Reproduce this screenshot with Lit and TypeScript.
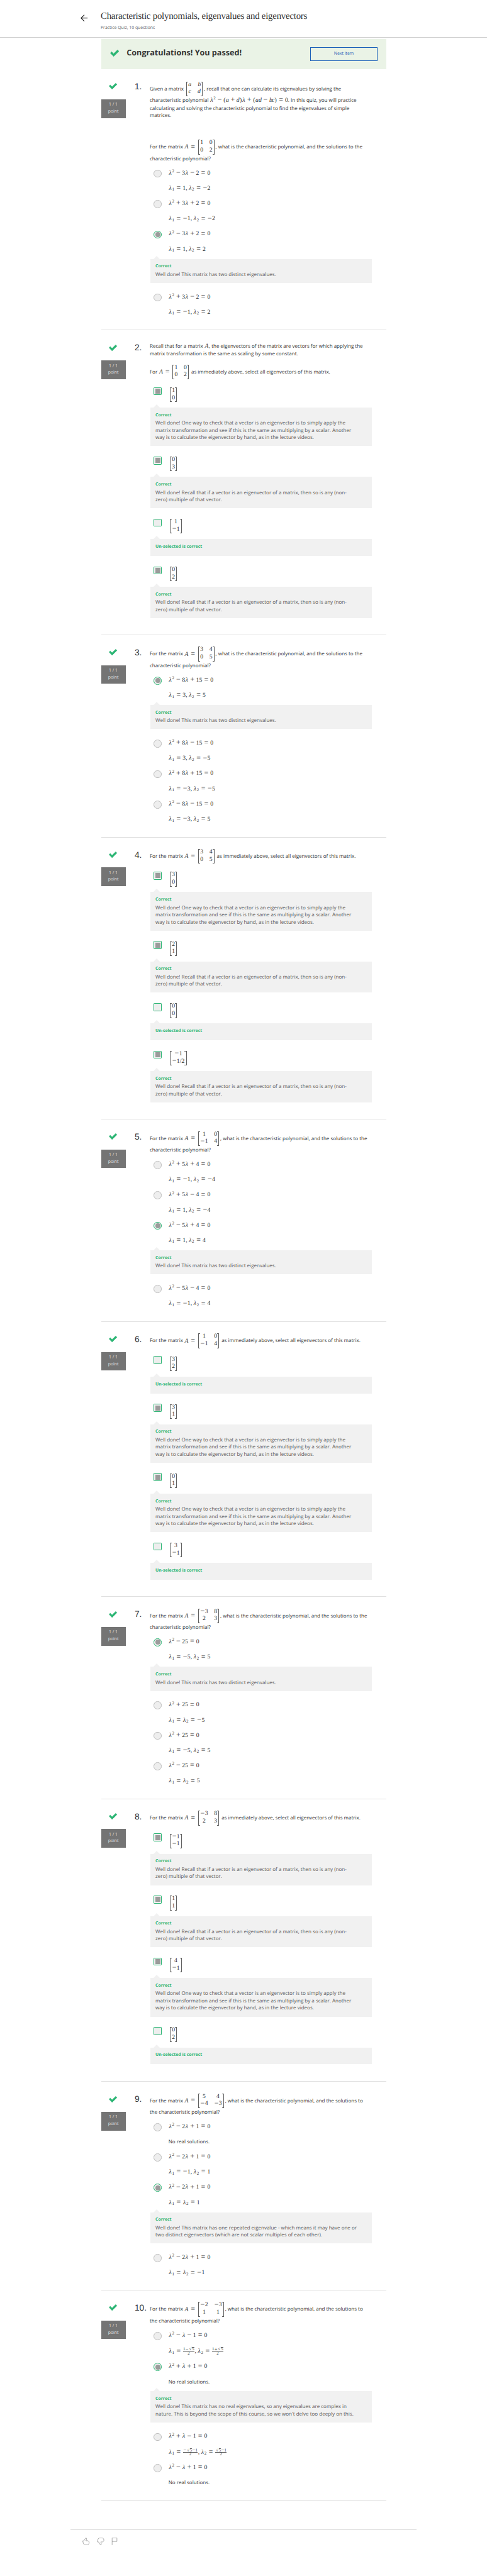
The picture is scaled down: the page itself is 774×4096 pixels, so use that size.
import { LitElement, html, svg, css, nothing, TemplateResult } from "lit";
import { customElement, property } from "lit/decorators.js";
import { classMap } from "lit/directives/class-map.js";

type Matrix = string[][];
interface Feedback { title: string; lines: string[] }
interface Choice { on: boolean; kind: "radio" | "check"; rows?: string[]; vec?: Matrix; note?: Feedback }
interface Question { intro: TemplateResult; choices: Choice[]; tail?: number }

/* ---------- math typesetting ---------- */

const WIDTHS: Record<string, string> = { a: "wa", b: "wb", c: "wc", d: "wd", A: "wA" };

const token = (t: string): TemplateResult => {
  if (t === "L") return html`<i class="lam">λ</i>`;
  if (t === "L2") return html`<i class="lam">λ</i><span class="sup">2</span>`;
  if (t === "L_1") return html`<i class="lam">λ</i><span class="sub">1</span>`;
  if (t === "L_2") return html`<i class="lam">λ</i><span class="sub">2</span>`;
  if (t === "=") return html`<span class="op rel"><span class="big">=</span></span>`;
  if (t === "+" ) return html`<span class="op bin"><span class="big">+</span></span>`;
  if (t === "-") return html`<span class="op bin"><span class="big">−</span></span>`;
  if (t === "~") return html`<span class="op"><span class="big">−</span></span>`;
  if (t === "+s") return html`<span class="op"><span class="big">+</span></span>`;
  if (t === ",") return html`<span class="comma">,</span>`;
  if (t === "(" || t === ")") return html`<span class="par">${t}</span>`;
  if (t === "r5") return html`<span class="root">√</span><span class="under">5</span>`;
  if (WIDTHS[t]) return html`<i class="var ${WIDTHS[t]}">${t}</i>`;
  if (t.startsWith("F:")) {
    const [n, d] = t.slice(2).split("|");
    return html`<span class="frac"><span class="num">${n.split(";").map(token)}</span><span class="den">${d}</span></span>`;
  }
  return html`<span class="dig">${t}</span>`;
};

const math = (s: string) => html`<span class="math">${s.split(" ").map(token)}</span>`;

const matrix = (m: Matrix) => html`<span class="math matrix"><span class="br left"></span>${m[0].map((_, c) =>
  html`<span class="col">${m.map(r => html`<span class="cell">${r[c].split(" ").map(token)}</span>`)}</span>`)}<span class="br right"></span></span>`;

const mathStyles = css`
  .math { font: 16.94px/0 "Liberation Serif", "Times New Roman", serif; white-space: nowrap; color: #2e2e2e; }
  .math span, .math i { line-height: 0; }
  .lam, .var, .op, .comma, .par, .sup, .sub, .root { display: inline-block; text-align: center; }
  .lam { width: .583em; }
  .wa { width: .529em; } .wb { width: .429em; } .wc { width: .433em; } .wd { width: .52em; } .wA { width: .75em; }
  .op { width: .778em; }
  .bin { margin: 0 .222em; }
  .rel { margin: 0 .278em; }
  .big { font-size: 1.22em; }
  .op .big { display: inline-block; margin: 0 -.2em; vertical-align: -.03em; }
  .comma { width: .278em; margin-right: .167em; }
  .par { width: .389em; }
  .sup, .sub { font-size: .72em; width: .5em; margin-right: .07em; }
  .sup { vertical-align: .53em; }
  .sub { vertical-align: -.21em; }
  .matrix { display: inline-flex; height: 40.6px; vertical-align: -16px; gap: 0; }
  .col { display: flex; flex-direction: column; margin-top: -1.8px; }
  .col + .col { margin-left: 1em; }
  .cell { height: 20.5px; text-align: center; }
  .math .cell { line-height: 20.5px; }
  .br { width: 5.4px; box-sizing: border-box; border: 1.4px solid #606060; height: 40.6px; }
  .left { margin-left: 3px; border-right: none; margin-right: .3px; }
  .right { margin-right: 3px; border-left: none; margin-left: .3px; }
  .frac { display: inline-flex; flex-direction: column; align-items: center; font-size: .7em; margin: 0 .12em; vertical-align: 7px; }
  .num, .den { height: 11px; white-space: nowrap; }
  .math .num, .math .den { line-height: 12px; }
  .num { border-bottom: 1px solid #666; }
  .root { width: .8em; }
  .under { border-top: 1px solid #777; }
  .math .under { line-height: .8; display: inline-block; }
`;

/* ---------- pieces ---------- */

@customElement("check-mark")
class CheckMark extends LitElement {
  static styles = css`
    :host { display: block; width: 23px; height: 18px; }
    svg { display: block; width: 100%; height: 100%; }
  `;
  render() {
    return html`<svg viewBox="0 0 25 19.4"><path d="M.8 9.1 4.4 5.9 9.7 11.5 20.6.8 24.3 4.4 9.7 18.6Z"
      fill="#2ab573" stroke="#2ab573" stroke-width="1.4" stroke-linejoin="round"/></svg>`;
  }
}

@customElement("quiz-choice")
class QuizChoice extends LitElement {
  @property({ attribute: false }) choice!: Choice;
  static styles = [mathStyles, css`
    :host { display: block; }
    .option { display: flex; padding-left: 11px; }
    .option.radio { height: 84.4px; }
    .option.radio.plain { height: 83.4px; }
    .option.radio.tall { height: 86.4px; }
    .option.check { height: 56.6px; }
    .control { box-sizing: border-box; flex: none; width: 22px; height: 22px; margin-right: 19px;
      background: #eee; border: 1px solid #bdbdbd; display: flex; align-items: center; justify-content: center; }
    .radio .control { border-radius: 50%; margin-top: 10.6px; }
    .check .control { border: 2px solid #2ab573; border-radius: 2px; }
    .on .control { border: 2px solid #2ab573; }
    .dot { width: 14px; height: 14px; background: #9b9b9b; }
    .radio .dot { border-radius: 50%; }
    .row { height: 42.3px; line-height: 42.3px; white-space: nowrap; }
    .tall .row + .row { margin-top: 2.2px; }
    .vec { height: 41px; line-height: 49.2px; margin-top: .5px; margin-left: 1px; white-space: nowrap; }
    .vec .matrix { vertical-align: top; }
    .panel { position: relative; width: 614px; margin: 0 0 0 1px; box-sizing: border-box; padding: 13.5px 15px 13.3px;
      background: #f1f1f1; color: #5a5a5a; line-height: 20px; white-space: nowrap; }
    .radio + .panel { margin-top: 5px; margin-bottom: 18.7px; }
    .check + .panel { margin-bottom: 28.9px; }
    .panel::before { content: ""; position: absolute; left: 10px; bottom: 100%; border: 10px solid transparent;
      border-top: none; border-bottom-color: #f1f1f1; }
    .title { font-size: 12px; font-weight: 700; color: #2ab573; line-height: 19px; margin-bottom: 1px; }
  `];
  render() {
    const c = this.choice;
    const last = c.rows?.[1] ?? "";
    return html`
      <div class=${classMap({ option: true, [c.kind]: true, on: c.on, plain: last.startsWith("No"), tall: last.includes("F:") })}>
        <span class="control">${c.on ? html`<span class="dot"></span>` : nothing}</span>
        ${c.vec
          ? html`<div class="vec">${matrix(c.vec)}</div>`
          : html`<div>${c.rows!.map(r => html`<div class="row">${r.startsWith("No") ? r : math(r)}</div>`)}</div>`}
      </div>
      ${c.note ? html`<div class="panel"><div class="title">${c.note.title}</div>${c.note.lines.map(l => html`<div>${l}</div>`)}</div>` : nothing}
    `;
  }
}

@customElement("quiz-question")
class QuizQuestion extends LitElement {
  @property({ attribute: false }) question!: Question;
  @property({ type: Number }) number = 1;
  static styles = [mathStyles, css`
    :host { display: grid; grid-template-columns: 68px 25px 42px 1fr; }
    .status { padding-top: 38.8px; }
    check-mark { margin: 0 auto; }
    .badge { box-sizing: border-box; height: 52px; margin-top: 26px; padding-top: 8px; background: #747474; color: #e4e4e4;
      font-size: 12px; line-height: 18px; text-align: center; }
    .number { grid-column: 3; padding-top: 34.5px; font: 24px/28px "Liberation Sans", Arial, sans-serif; white-space: nowrap; }
    .body { padding-top: 32px; }
    .choices { padding-bottom: 26.8px; }
    .choices.checks { padding-bottom: 16.5px; }
    .mrow { height: 42.3px; line-height: 42.3px; white-space: nowrap; }
    .lrow { height: 29.8px; line-height: 21px; white-space: nowrap; }
    .gap { height: 20.4px; }
    .i1 { height: 20px; line-height: 20px; padding-top: .2px; white-space: nowrap; }
    .i2 { height: 21.2px; line-height: 21px; padding-top: 1.8px; white-space: nowrap; }
    .i3 { height: 16px; line-height: 18px; white-space: nowrap; }
    .skip { height: 60px; }
    .q1 { padding-top: 2px; }
    .r1 { padding-top: 2.5px; height: 21px; line-height: 21px; white-space: nowrap; }
    .r2 { height: 39px; line-height: 21px; white-space: nowrap; }
  `];
  render() {
    const q = this.question;
    const checks = q.choices[0].kind === "check";
    return html`
      <div class="status"><check-mark></check-mark><div class="badge">1 / 1<br>point</div></div>
      <div class="number">${this.number}.</div>
      <div class="body" style="margin-bottom:${q.tail ?? 0}px">
        ${q.intro}
        <div class=${classMap({ choices: true, checks })}>${q.choices.map(c => html`<quiz-choice .choice=${c}></quiz-choice>`)}</div>
      </div>`;
  }
}

/* ---------- content ---------- */

const DISTINCT: Feedback = { title: "Correct", lines: ["Well done! This matrix has two distinct eigenvalues."] };
const CHECKING: Feedback = { title: "Correct", lines: [
  "Well done! One way to check that a vector is an eigenvector is to simply apply the",
  "matrix transformation and see if this is the same as multiplying by a scalar. Another",
  "way is to calculate the eigenvector by hand, as in the lecture videos."] };
const MULTIPLE: Feedback = { title: "Correct", lines: [
  "Well done! Recall that if a vector is an eigenvector of a matrix, then so is any (non-",
  "zero) multiple of that vector."] };
const UNSELECTED: Feedback = { title: "Un-selected is correct", lines: [] };

const radio = (rows: string[], note?: Feedback): Choice => ({ on: !!note, kind: "radio", rows, note });
const box = (vec: Matrix, note: Feedback): Choice => ({ on: note !== UNSELECTED, kind: "check", vec, note });

const poly = (m: Matrix, wide = false) => html`
  <div class="mrow">For the matrix ${math("A =")}${matrix(m)}, what is the characteristic polynomial, and the solutions to${wide ? "" : " the"}</div>
  <div class="lrow">${wide ? "the " : ""}characteristic polynomial?</div>`;
const vecs = (m: Matrix) => html`
  <div class="mrow">For the matrix ${math("A =")}${matrix(m)} as immediately above, select all eigenvectors of this matrix.</div>
  <div class="gap"></div>`;

const QUESTIONS: Question[] = [
  {
    intro: html`
      <div class="q1"></div>
      <div class="mrow">Given a matrix ${matrix([["a", "b"], ["c", "d"]])}, recall that one can calculate its eigenvalues by solving the</div>
      <div class="i1">characteristic polynomial ${math("L2 - ( a + d ) L + ( a d - b c ) = 0")}. In this quiz, you will practice</div>
      <div class="i2">calculating and solving the characteristic polynomial to find the eigenvalues of simple</div>
      <div class="i3">matrices.</div>
      <div class="skip"></div>
      ${poly([["1", "0"], ["0", "2"]])}`,
    choices: [
      radio(["L2 - 3 L - 2 = 0", "L_1 = 1 , L_2 = ~ 2"]),
      radio(["L2 + 3 L + 2 = 0", "L_1 = ~ 1 , L_2 = ~ 2"]),
      radio(["L2 - 3 L + 2 = 0", "L_1 = 1 , L_2 = 2"], DISTINCT),
      radio(["L2 + 3 L - 2 = 0", "L_1 = ~ 1 , L_2 = 2"]),
    ],
  },
  {
    tail: .5,
    intro: html`
      <div class="r1">Recall that for a matrix ${math("A")}, the eigenvectors of the matrix are vectors for which applying the</div>
      <div class="r2">matrix transformation is the same as scaling by some constant.</div>
      <div class="mrow">For ${math("A =")}${matrix([["1", "0"], ["0", "2"]])} as immediately above, select all eigenvectors of this matrix.</div>
      <div class="gap"></div>`,
    choices: [box([["1"], ["0"]], CHECKING), box([["0"], ["3"]], MULTIPLE), box([["1"], ["~ 1"]], UNSELECTED), box([["0"], ["2"]], MULTIPLE)],
  },
  {
    intro: poly([["3", "4"], ["0", "5"]]),
    choices: [
      radio(["L2 - 8 L + 15 = 0", "L_1 = 3 , L_2 = 5"], DISTINCT),
      radio(["L2 + 8 L - 15 = 0", "L_1 = 3 , L_2 = ~ 5"]),
      radio(["L2 + 8 L + 15 = 0", "L_1 = ~ 3 , L_2 = ~ 5"]),
      radio(["L2 - 8 L - 15 = 0", "L_1 = ~ 3 , L_2 = 5"]),
    ],
  },
  {
    intro: vecs([["3", "4"], ["0", "5"]]),
    choices: [box([["3"], ["0"]], CHECKING), box([["2"], ["1"]], MULTIPLE), box([["0"], ["0"]], UNSELECTED), box([["~ 1"], ["~ 1 / 2"]], MULTIPLE)],
  },
  {
    tail: .6,
    intro: poly([["1", "0"], ["~ 1", "4"]]),
    choices: [
      radio(["L2 + 5 L + 4 = 0", "L_1 = ~ 1 , L_2 = ~ 4"]),
      radio(["L2 + 5 L - 4 = 0", "L_1 = 1 , L_2 = ~ 4"]),
      radio(["L2 - 5 L + 4 = 0", "L_1 = 1 , L_2 = 4"], DISTINCT),
      radio(["L2 - 5 L - 4 = 0", "L_1 = ~ 1 , L_2 = 4"]),
    ],
  },
  {
    tail: .5,
    intro: vecs([["1", "0"], ["~ 1", "4"]]),
    choices: [box([["3"], ["2"]], UNSELECTED), box([["3"], ["1"]], CHECKING), box([["0"], ["1"]], CHECKING), box([["3"], ["~ 1"]], UNSELECTED)],
  },
  {
    intro: poly([["~ 3", "8"], ["2", "3"]]),
    choices: [
      radio(["L2 - 25 = 0", "L_1 = ~ 5 , L_2 = 5"], DISTINCT),
      radio(["L2 + 25 = 0", "L_1 = L_2 = ~ 5"]),
      radio(["L2 + 25 = 0", "L_1 = ~ 5 , L_2 = 5"]),
      radio(["L2 - 25 = 0", "L_1 = L_2 = 5"]),
    ],
  },
  {
    tail: 1.6,
    intro: vecs([["~ 3", "8"], ["2", "3"]]),
    choices: [box([["~ 1"], ["~ 1"]], MULTIPLE), box([["1"], ["1"]], MULTIPLE), box([["4"], ["~ 1"]], CHECKING), box([["0"], ["2"]], UNSELECTED)],
  },
  {
    tail: -1.3,
    intro: poly([["5", "4"], ["~ 4", "~ 3"]], true),
    choices: [
      radio(["L2 - 2 L + 1 = 0", "No real solutions."]),
      radio(["L2 - 2 L + 1 = 0", "L_1 = ~ 1 , L_2 = 1"]),
      radio(["L2 - 2 L + 1 = 0", "L_1 = L_2 = 1"], { title: "Correct", lines: [
        "Well done! This matrix has one repeated eigenvalue - which means it may have one or",
        "two distinct eigenvectors (which are not scalar multiples of each other)."] }),
      radio(["L2 - 2 L + 1 = 0", "L_1 = L_2 = ~ 1"]),
    ],
  },
  {
    tail: -.6,
    intro: poly([["~ 2", "~ 3"], ["1", "1"]], true),
    choices: [
      radio(["L2 - L - 1 = 0", "L_1 = F:1;~;r5|2 , L_2 = F:1;+s;r5|2"]),
      radio(["L2 + L + 1 = 0", "No real solutions."], { title: "Correct", lines: [
        "Well done! This matrix has no real eigenvalues, so any eigenvalues are complex in",
        "nature. This is beyond the scope of this course, so we won't delve too deeply on this."] }),
      radio(["L2 + L - 1 = 0", "L_1 = F:~;r5;~;1|2 , L_2 = F:r5;~;1|2"]),
      radio(["L2 - L + 1 = 0", "No real solutions."]),
    ],
  },
];

/* ---------- page ---------- */

@customElement("app-root")
class AppRoot extends LitElement {
  static styles = css`
    :host { display: block; width: 1349px; height: 7142px; overflow: hidden; zoom: .57345; background: #fff; color: #333;
      font: 14px/21px "Open Sans", "Noto Sans", sans-serif; text-rendering: geometricPrecision; }
    header { box-sizing: border-box; height: 105px; border-bottom: 1px solid #cfcfcf; padding: 30px 0 0 224px; display: flex; }
    .back { width: 20px; height: 20px; margin: 10.5px 35px 0 0; }
    h1 { margin: 0; font: 400 26px/32px "Liberation Serif", "Times New Roman", serif; letter-spacing: -.43px; color: #333; white-space: nowrap; }
    .sub { font-size: 12px; line-height: 18px; margin-top: 8px; color: #666; }
    main { width: 790px; margin: 3px 0 0 280px; }
    .banner { box-sizing: border-box; height: 84.3px; background: #eaf3e6; display: flex; padding: 0 24px 0 25px; align-items: center; }
    .banner check-mark { width: 25px; height: 19.4px; margin: -5px 21px 0 0; }
    .banner strong { flex: 1; font-size: 22px; line-height: 30px; margin-top: -9px; }
    .next { box-sizing: border-box; width: 186px; height: 37px; border: 1px solid #1a5fb8; color: #1a5fb8; font-size: 12px; line-height: 35px; text-align: center; }
    .rule { box-sizing: border-box; height: 2px; border-top: 2px solid #e0e0e0; margin: 0; }
    footer { width: 960px; margin: 80.5px 0 0 195px; box-sizing: border-box; border-top: 1px solid #d4d4d4; padding: 20px 0 0 33px; }
    .tools { display: block; width: 98px; height: 21px; }
  `;
  render() {
    return html`
      <header>
        <svg class="back" viewBox="0 0 20 20" fill="none" stroke="#222" stroke-width="2"><path d="M19.5 10H1.5M10.5 1 1.5 10 10.5 19"/></svg>
        <div>
          <h1>Characteristic polynomials, eigenvalues and eigenvectors</h1>
          <div class="sub">Practice Quiz, 10 questions</div>
        </div>
      </header>
      <main>
        <div class="banner"><check-mark></check-mark><strong>Congratulations! You passed!</strong><div class="next">Next Item</div></div>
        ${QUESTIONS.map((q, i) => html`<quiz-question .question=${q} .number=${i + 1}></quiz-question><div class="rule"></div>`)}
      </main>
      <footer>
        <svg class="tools" viewBox="144 110 294 63" fill="none" stroke="#555" stroke-width="2.6" stroke-linejoin="round">
          ${svg`<path d="M146 137H155L170 114Q176 110 179 116L177 126L173 136H191Q201 142 200 152Q199 163 190 170H161Q151 163 149 148Z"/>
          <path d="M269 146H278L292 168Q297 172 301 165L300 157L297 146H313Q323 140 323 131Q323 118 311 112H286Q273 116 271 132Z"/>
          <path d="M391 172V112H431V142H391"/>`}
        </svg>
      </footer>`;
  }
}
